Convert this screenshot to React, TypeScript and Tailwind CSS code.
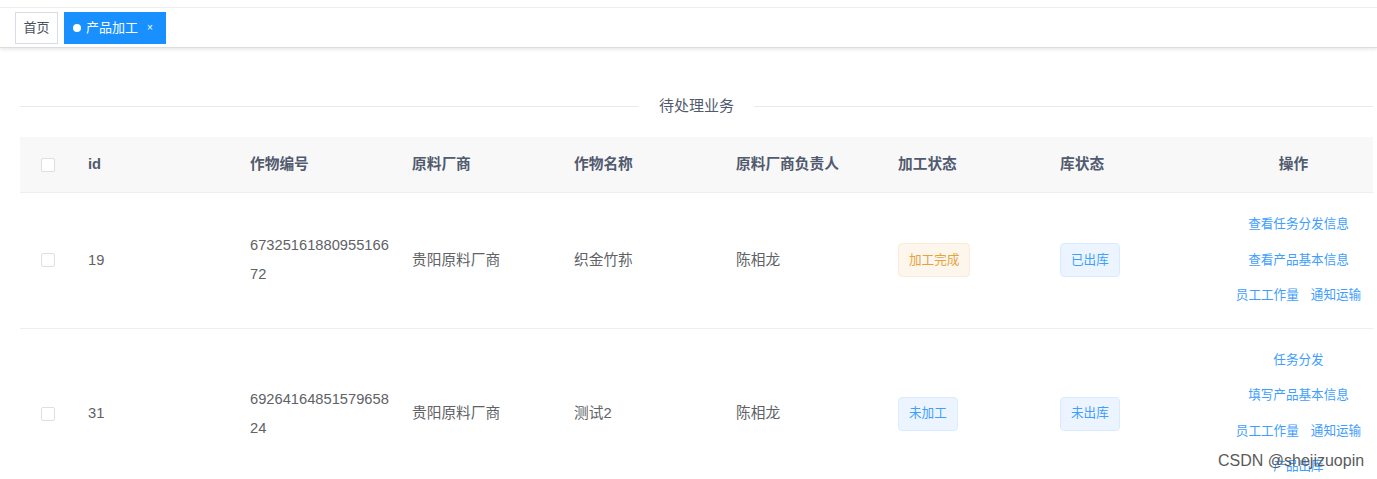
import React from "react";

const FONT = '"Liberation Sans", "Noto Sans CJK SC", sans-serif';

function Checkbox() {
  return <span className="block w-[14px] h-[14px] rounded-[2px] border border-[#dcdfe6] bg-white" />;
}

function Tag({ text, kind }: { text: string; kind: "warn" | "info" }) {
  const cls =
    kind === "warn"
      ? "bg-[#fdf6ec] border-[#faecd8] text-[#e6a23c]"
      : "bg-[#ecf5ff] border-[#d9ecff] text-[#409eff]";
  return (
    <span className={`inline-flex items-center h-[34px] px-[10px] rounded-[4px] border text-[12.6px] ${cls}`}>{text}</span>
  );
}

type Row = {
  id: string;
  code: string;
  vendor: string;
  crop: string;
  owner: string;
  proc: { text: string; kind: "warn" | "info" };
  stock: string;
  ops: string[][];
};

const rows: Row[] = [
  {
    id: "19",
    code: "6732516188095516672",
    vendor: "贵阳原料厂商",
    crop: "织金竹荪",
    owner: "陈相龙",
    proc: { text: "加工完成", kind: "warn" },
    stock: "已出库",
    ops: [["查看任务分发信息"], ["查看产品基本信息"], ["员工工作量", "通知运输"]],
  },
  {
    id: "31",
    code: "6926416485157965824",
    vendor: "贵阳原料厂商",
    crop: "测试2",
    owner: "陈相龙",
    proc: { text: "未加工", kind: "info" },
    stock: "未出库",
    ops: [["任务分发"], ["填写产品基本信息"], ["员工工作量", "通知运输"], ["产品出库"]],
  },
];

const headers = ["id", "作物编号", "原料厂商", "作物名称", "原料厂商负责人", "加工状态", "库状态"];

export default function App() {
  return (
    <div className="relative w-[1377px] h-[479px] overflow-hidden bg-white" style={{ fontFamily: FONT }}>
      <div className="h-[7px] bg-white" />
      <div className="h-[41px] border-t border-[#eeeeee] border-b border-b-[#dcdcdc] shadow-[0_2px_3px_rgba(0,0,0,0.08)] flex items-start gap-[6px] pt-[4px] pl-[15px]">
        <div className="h-[32px] w-[43px] flex items-center justify-center border border-[#d8dce5] bg-white text-[13px] text-[#495060]">首页</div>
        <div className="h-[32px] w-[102px] pl-[9px] flex items-center bg-[#1890ff] text-white text-[13px]">
          <span className="w-[8px] h-[8px] rounded-full bg-white mr-[5px]" />
          <span>产品加工</span>
          <span className="ml-[9px] text-[10px] leading-none">×</span>
        </div>
      </div>

      <div className="pl-[20px] pr-[4px]">
        <div className="flex items-center h-[22px] mt-[47px] mb-[20px]">
          <div className="flex-1 h-px bg-[#e8eaec]" />
          <div className="px-[20px] text-[15px] text-[#515a6e]">待处理业务</div>
          <div className="flex-1 h-px bg-[#e8eaec]" />
        </div>

        <div className="flex h-[56px] bg-[#f8f8f9] border-b border-[#ebeef5] text-[14.7px] font-bold text-[#515a6e]">
          <div className="w-[56px] flex items-center justify-center">
            <Checkbox />
          </div>
          {headers.map((h) => (
            <div key={h} className="w-[162px] pl-[12px] flex items-center">
              {h}
            </div>
          ))}
          <div className="flex-1 pl-[4px] flex items-center justify-center">操作</div>
        </div>

        {rows.map((r) => (
          <div key={r.id} className="flex border-b border-[#ebeef5] text-[14.7px] text-[#606266]">
            <div className="w-[56px] flex items-center justify-center">
              <Checkbox />
            </div>
            <div className="w-[162px] pl-[12px] flex items-center">{r.id}</div>
            <div className="w-[162px] pl-[12px] pr-[8px] flex items-center">
              <span className="break-all leading-[29px]">{r.code}</span>
            </div>
            <div className="w-[162px] pl-[12px] flex items-center">{r.vendor}</div>
            <div className="w-[162px] pl-[12px] flex items-center">{r.crop}</div>
            <div className="w-[162px] pl-[12px] flex items-center">{r.owner}</div>
            <div className="w-[162px] pl-[12px] flex items-center">
              <Tag text={r.proc.text} kind={r.proc.kind} />
            </div>
            <div className="w-[162px] pl-[12px] flex items-center">
              <Tag text={r.stock} kind="info" />
            </div>
            <div className="flex-1 pl-[14px] py-[14px] flex flex-col items-center justify-center text-[12.6px] text-[#409eff]">
              {r.ops.map((line, i) => (
                <div key={i} className="h-[35.5px] flex items-center gap-[12px]">
                  {line.map((t) => (
                    <span key={t}>{t}</span>
                  ))}
                </div>
              ))}
            </div>
          </div>
        ))}
      </div>

      <div className="absolute left-[1218px] top-[449px] text-[16px] text-[#5a5a5a] leading-[24px]" style={{ fontFamily: '"Liberation Sans", sans-serif' }}>
        CSDN @shejizuopin
      </div>
    </div>
  );
}
